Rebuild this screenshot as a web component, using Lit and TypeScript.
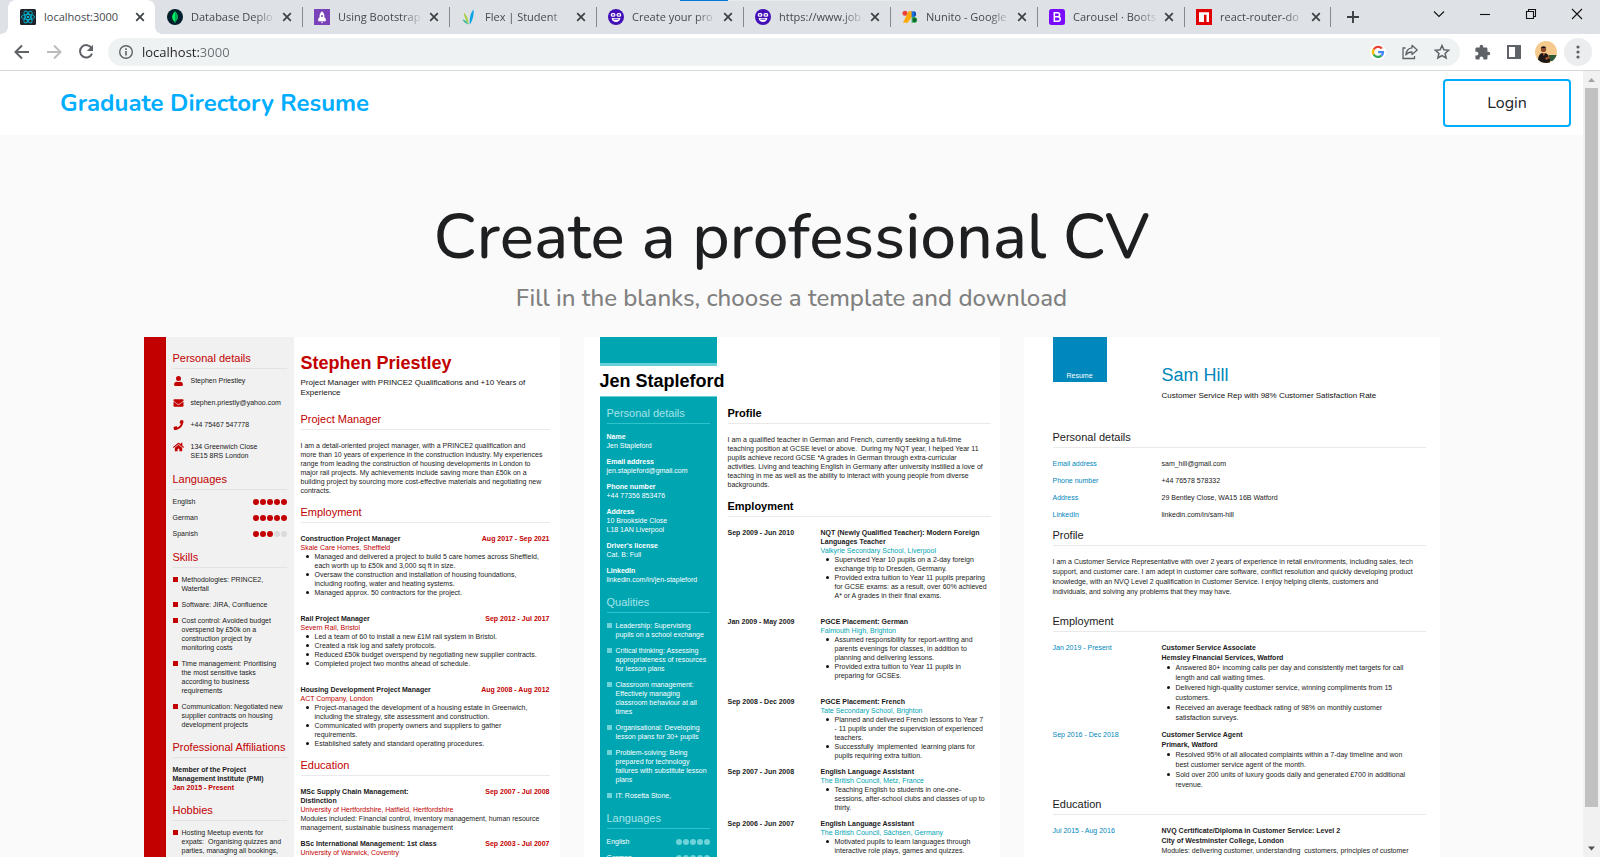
import { LitElement, html, css, svg, nothing, type TemplateResult } from "lit";
import { customElement } from "lit/decorators.js";
import { classMap } from "lit/directives/class-map.js";

/* ---------- icons ---------- */

const closeIcon = html`<svg width="10" height="10" viewBox="0 0 10 10" aria-hidden="true">
  <path d="M1.2 1.2 8.8 8.8M8.8 1.2 1.2 8.8" stroke="#3c4043" stroke-width="1.7" fill="none" />
</svg>`;

const reactFav = svg`<rect width="16" height="16" rx="1.5" fill="#20232a"/>
  <g fill="none" stroke="#00b4d0" stroke-width=".9">
    <ellipse cx="8" cy="8" rx="6.6" ry="2.6"/>
    <ellipse cx="8" cy="8" rx="6.6" ry="2.6" transform="rotate(60 8 8)"/>
    <ellipse cx="8" cy="8" rx="6.6" ry="2.6" transform="rotate(120 8 8)"/>
  </g><circle cx="8" cy="8" r="1.3" fill="#00b4d0"/>`;
const mongoFav = svg`<circle cx="8" cy="8" r="8" fill="#001e2b"/>
  <path d="M8 2.2c2 2 3 4 2.800 6-.1 2-1.200 3.300-2.400 4.200L8.200 14h-.5l-.2-1.600C6.200 11.500 5.200 10.200 5.100 8.200 5 6.200 6.200 4 8 2.200z" fill="#00ed64"/>
  <path d="M8 2.200v10.200c1.300-1 2.600-2.300 2.800-4.200.2-2-.8-4-2.800-6z" fill="#00a651"/>`;
const rocketFav = svg`<rect width="16" height="16" fill="#7a42b8"/>
  <path d="M8 2.300c2 1.500 2.600 3.700 2.400 6l1.400 1.500v2.400H4.200V9.800l1.400-1.500c-.2-2.300.4-4.500 2.400-6z" fill="#fff"/>
  <path d="M7 12.800h2L8 14.600z" fill="#fff"/><circle cx="8" cy="7" r="1" fill="#7a42b8"/>`;
const flexFav = svg`<path d="M8.800 15.500C8.300 10 9.200 4 12.600 0.500c.3 4-.4 10.500-3.800 15z" fill="#0aa5e6"/>
  <path d="M7.800 15.200C5.500 12 3.300 8.500 2.600 3.800c3 2 4.800 6.500 5.200 11.400z" fill="#a6ce39"/>
  <path d="M7.300 15.400C4.800 14.600 2.300 12.900 1.400 10.600c2.500.4 4.900 2.300 5.900 4.800z" fill="#34b78f"/>`;
const smileFav = svg`<circle cx="8" cy="8" r="8" fill="#4310b8"/>
  <g fill="none" stroke="#fff" stroke-width="1.200" stroke-linecap="round">
    <rect x="3.300" y="4.600" width="3.600" height="2.600" rx="1.300"/><rect x="9.100" y="4.600" width="3.600" height="2.600" rx="1.300"/>
  </g><path d="M3.600 9h8.800c-.3 2.600-2.100 4-4.400 4s-4.100-1.400-4.400-4z" fill="#fff"/>
  <path d="M5.600 10.200h4.800" stroke="#4310b8" stroke-width=".9"/>`;
const fontsFav = svg`<circle cx="3" cy="4.200" r="2.500" fill="#ea4335"/>
  <path d="M6.500 2.200h3.700v5.200L5.600 13.800H1z" fill="#fbaa0a"/>
  <path d="M9.600 2.200h2.200a3 3 0 0 1 0 5.800H9.600z" fill="#1a73e8"/><path d="M12 2.300a2.900 2.900 0 0 1 0 5.600z" fill="#174ea6"/>
  <path d="M9.600 8h2.600a2.900 2.900 0 0 1 0 5.800H9.600z" fill="#34a853"/><circle cx="12.600" cy="11" r="2" fill="#0d652d"/>`;
const bootFav = svg`<rect width="16" height="16" rx="2.500" fill="#7a0bff"/>
  <g fill="none" stroke="#fff" stroke-width="1.500"><path d="M5.300 3.700h3.300a2 2 0 0 1 0 4H5.300zM5.300 7.700h3.700a2.250 2.250 0 0 1 0 4.500H5.300z"/></g>`;
const npmFav = svg`<rect width="16" height="16" fill="#e30000"/><path d="M3 3.200h10v9.800h-2.500V5.700H8V13H3z" fill="#fff"/>`;

const fav = (g: TemplateResult<2>) => html`<svg class="fav" width="16" height="16" viewBox="0 0 16 16" aria-hidden="true">${g}</svg>`;

const TABS: [TemplateResult<2>, string][] = [
  [reactFav, "localhost:3000"],
  [mongoFav, "Database Deplo"],
  [rocketFav, "Using Bootstrap"],
  [flexFav, "Flex | Student"],
  [smileFav, "Create your pro"],
  [smileFav, "https://www.job"],
  [fontsFav, "Nunito - Google"],
  [bootFav, "Carousel · Boots"],
  [npmFav, "react-router-do"],
];

const line = (d: string, w = 2, color = "#5f6368") =>
  html`<svg width="18" height="18" viewBox="0 0 18 18" aria-hidden="true"><path d=${d} fill="none" stroke=${color} stroke-width=${w} /></svg>`;

const ctl = (label: string, d: string) =>
  html`<button class="ctl" aria-label=${label}><svg width="12" height="12" viewBox="0 0 12 12" aria-hidden="true"><path d=${d} fill="none" stroke="#111" stroke-width="1.100" /></svg></button>`;

/* Font Awesome style contact glyphs */
const glyph = (vb: string, d: string) => html`<svg class="glyph" viewBox=${vb} aria-hidden="true"><path d=${d} fill="currentColor" /></svg>`;
const userG = glyph("0 0 448 512", "M224 256a128 128 0 1 0 0-256 128 128 0 0 0 0 256zm90 32h-17a174 174 0 0 1-146 0h-17A134 134 0 0 0 0 422v42c0 27 21 48 48 48h352c27 0 48-21 48-48v-42c0-74-60-134-134-134z");
const mailG = glyph("0 0 512 512", "M502 191c4-3 10 0 10 4v205c0 27-21 48-48 48H48c-27 0-48-21-48-48V195c0-5 6-7 10-4 22 17 52 40 155 114 21 15 57 48 91 48 34 0 71-33 91-48 103-74 133-97 155-114zM256 320c23 0 57-30 74-42 133-96 143-105 174-129 5-5 8-12 8-19v-18c0-27-21-48-48-48H48c-27 0-48 21-48 48v18c0 7 3 14 8 19 31 24 41 33 174 129 17 12 51 42 74 42z");
const phoneG = glyph("0 0 512 512", "M493 25 389 1c-11-3-23 3-27 14l-48 112c-4 10-1 21 7 28l60 50a371 371 0 0 1-177 176l-49-60c-7-8-18-11-28-7L15 362c-11 4-17 16-14 27l24 104c3 11 12 19 23 19 256 0 464-207 464-464 0-11-8-20-19-23z");
const homeG = glyph("0 0 576 512", "M280 148 96 300v164a16 16 0 0 0 16 16h112a16 16 0 0 0 16-16v-96a16 16 0 0 1 16-16h64a16 16 0 0 1 16 16v96a16 16 0 0 0 16 16h112a16 16 0 0 0 16-16V300L296 148a12 12 0 0 0-16 0zm292 103-84-69V44a12 12 0 0 0-12-12h-56a12 12 0 0 0-12 12v73l-90-74a48 48 0 0 0-61 0L4 251a12 12 0 0 0-1 17l25 31a12 12 0 0 0 17 2l235-194a12 12 0 0 1 16 0l235 194a12 12 0 0 0 17-2l25-31a12 12 0 0 0-1-17z");

/* ---------- résumé building blocks ---------- */

interface Job {
  title: string;
  dates: string;
  place?: string;
  text?: string;
  points?: string[];
}

const points = (items: string[] = []) =>
  items.length ? html`<ul class="points">${items.map((t) => html`<li>${t}</li>`)}</ul>` : nothing;

const squares = (items: string[]) => html`<ul class="squares">${items.map((t) => html`<li>${t}</li>`)}</ul>`;

const rating = (name: string, n: number) => html`<li>
  <span>${name}</span>
  <span class="dots" role="img" aria-label="${n} of 5">${[1, 2, 3, 4, 5].map((i) => html`<i class=${classMap({ off: i > n })}></i>`)}</span>
</li>`;

const body = (j: Job) => html`
  ${j.place ? html`<p class="place">${j.place}</p>` : nothing}
  ${j.text ? html`<p>${j.text}</p>` : nothing}
  ${points(j.points)}`;

const stacked = (jobs: Job[]) => jobs.map((j) => html`<article>
  <header class="job-head"><h3>${j.title}</h3><time>${j.dates}</time></header>${body(j)}
</article>`);

const columns = (jobs: Job[]) => jobs.map((j) => html`<article class="cols">
  <time>${j.dates}</time><div><h3>${j.title}</h3>${body(j)}</div>
</article>`);

const section = (title: string, content: unknown, kind = "") =>
  html`<section><h2>${title}</h2><div class="content ${kind}">${content}</div></section>`;

@customElement("resume-card")
class ResumeCard extends LitElement {
  static properties = { variant: { type: String } };
  declare variant: string;

  static styles = css`
    :host {
      display: block;
      min-width: 0;
      background: #fff;
      color: #1a1a1a;
      font: 7px/9px "Liberation Sans", Arial, sans-serif;
      white-space: nowrap;
      overflow: hidden;
    }
    h1, h2, h3, p, ul, dl, dd, address { margin: 0; padding: 0; font-style: normal; }
    ul { list-style: none; }
    h3, dt, time { font-size: 7px; line-height: inherit; font-weight: 700; }
    h1 { font-size: 18px; line-height: 20px; }
    h2 {
      font-size: 11px; line-height: 14px; font-weight: 400;
      padding-bottom: 3px; border-bottom: 1px solid #e9e9e9;
    }
    h3, p, li, dd, .content span { white-space: pre; }
    .lead { font-size: 8px; line-height: 10px; color: #111; }

    .points li { display: flex; }
    .points li::before {
      content: ""; flex: none; width: 3px; height: 3px; border-radius: 50%;
      background: #111; margin: 3px 6px 0 5px;
    }
    .squares { display: grid; gap: 7px; }
    .squares li { display: flex; gap: 4px; }
    .squares li::before { content: ""; flex: none; width: 5px; height: 5px; margin-top: 2px; background: var(--accent); }
    .dots { display: flex; gap: 1px; }
    .dots i { width: 6px; height: 6px; border-radius: 50%; background: var(--accent); }
    .dots i.off { background: #dadada; }
    .ratings { display: grid; gap: 7px; padding-bottom: 1px; }
    .ratings li { display: flex; justify-content: space-between; align-items: center; height: 9px; }
    .entries { display: grid; gap: 17px; }
    .tight { display: grid; gap: 7px; }
    .job-head { display: flex; justify-content: space-between; }
    aside { display: flex; flex-direction: column; gap: 11px; }
    main { display: flex; flex-direction: column; gap: 10px; min-width: 0; }
    main .content { padding-top: 11px; }

    /* red */
    .red { --accent: #c20000; display: grid; grid-template-columns: 128px 1fr; border-left: 22px solid #c20000; }
    .red aside { background: #f1f1f1; padding: 14px 7px 40px; }
    .red aside .content { padding-top: 7px; }
    .red aside h2 { border-color: #e2e2e2; }
    .red main { padding: 16px 10px 40px 7px; }
    .red h1, .red h2, .red .place, .red time { color: #c20000; }
    .red .lead { margin-top: -5px; margin-bottom: 4px; }
    .contacts { display: grid; gap: 12px; padding-bottom: 3px; }
    .contacts li { display: flex; gap: 7px; min-height: 10px; }
    .contacts li:last-child { height: 16px; }
    .glyph { width: 11px; height: 10px; flex: none; color: #c20000; }

    /* teal */
    .teal { --accent: #6fd3da; padding: 0 9px 0 16px; }
    .teal .band { width: 117px; height: 26px; background: #00a5b2; border-bottom: 3px solid #66d0d8; }
    .teal h1 { color: #000; padding: 5px 0; }
    .teal .body { display: grid; grid-template-columns: 117px 1fr; gap: 11px; }
    .teal aside { background: #00a5b2; color: #fff; padding: 9px 7px 40px; border-top: 1px solid #66d0d8; }
    .teal aside h2 { color: #a6e4e9; border-color: #2cc4cd; }
    .teal aside .content { padding-top: 8px; }
    .teal main { padding: 10px 0 40px; }
    .teal main h2 { font-weight: 700; color: #000; }
    .teal .place { color: #00a5b2; }
    .teal .cols { display: grid; grid-template-columns: 93px 1fr; }
    .facts { display: grid; gap: 7px; }

    /* blue */
    .blue { padding: 0 14px 40px 29px; }
    .blue .top { display: grid; grid-template-columns: 109px 1fr; height: 93px; }
    .blue .stamp {
      width: 54px; height: 45px; background: #0087bb; color: #fff; font-size: 7px; line-height: 9px;
      display: flex; align-items: flex-end; justify-content: center; padding-bottom: 2px; box-sizing: border-box;
    }
    .blue h1 { color: #0087bb; font-weight: 400; margin-top: 28px; }
    .blue .lead { margin-top: 6px; }
    .blue .cols { display: grid; grid-template-columns: 109px 1fr; line-height: 10px; }
    .blue time, .blue dt { color: #0087bb; font-weight: 400; }
    .blue .place { font-weight: 700; }
    .blue dl { display: grid; gap: 8px; }
    .blue dl div { display: grid; grid-template-columns: 109px 1fr; }
    .blue main { gap: 7px; }
    .blue .summary { line-height: 10px; padding-bottom: 10px; }
    .blue .details { padding-bottom: 2px; }
  `;

  private red() {
    return html`<div class="red">
      <aside>
        ${section("Personal details", html`<ul class="contacts">
          <li>${userG}<span>Stephen Priestley</span></li>
          <li>${mailG}<span>stephen.priestly@yahoo.com</span></li>
          <li>${phoneG}<span>+44 75467 547778</span></li>
          <li>${homeG}<span>${"134 Greenwich Close\nSE15 8RS London"}</span></li>
        </ul>`)}
        ${section("Languages", html`<ul class="ratings">${rating("English", 5)}${rating("German", 5)}${rating("Spanish", 3)}</ul>`)}
        ${section("Skills", squares([
          "Methodologies: PRINCE2,\nWaterfall",
          "Software: JIRA, Confluence",
          "Cost control: Avoided budget\noverspend by £50k on a\nconstruction project by\nmonitoring costs",
          "Time management: Prioritising\nthe most sensitive tasks\naccording to business\nrequirements",
          "Communication: Negotiated new\nsupplier contracts on housing\ndevelopment projects",
        ]))}
        ${section("Professional Affiliations", html`<h3>${"Member of the Project\nManagement Institute (PMI)"}</h3><time>Jan 2015 - Present</time>`)}
        ${section("Hobbies", squares(["Hosting Meetup events for\nexpats:  Organising quizzes and\nparties, managing all bookings,\nmenus and activities"]))}
      </aside>
      <main>
        <h1>Stephen Priestley</h1>
        <p class="lead">${"Project Manager with PRINCE2 Qualifications and +10 Years of\nExperience"}</p>
        ${section("Project Manager", html`<p>${"I am a detail-oriented project manager, with a PRINCE2 qualification and\nmore than 10 years of experience in the construction industry. My experiences\nrange from leading the construction of housing developments in London to\nmajor rail projects. My achievements include saving more than £50k on a\nbuilding project by sourcing more cost-effective materials and negotiating new\ncontracts."}</p>`)}
        ${section("Employment", stacked([
          { title: "Construction Project Manager", dates: "Aug 2017 - Sep 2021", place: "Skale Care Homes, Sheffield", points: [
            "Managed and delivered a project to build 5 care homes across Sheffield,\neach worth up to £50k and 3,000 sq ft in size.",
            "Oversaw the construction and installation of housing foundations,\nincluding roofing, water and heating systems.",
            "Managed approx. 50 contractors for the project."] },
          { title: "Rail Project Manager", dates: "Sep 2012 - Jul 2017", place: "Severn Rail, Bristol", points: [
            "Led a team of 60 to install a new £1M rail system in Bristol.",
            "Created a risk log and safety protocols.",
            "Reduced £50k budget overspend by negotiating new supplier contracts.",
            "Completed project two months ahead of schedule."] },
          { title: "Housing Development Project Manager", dates: "Aug 2008 - Aug 2012", place: "ACT Company, London", points: [
            "Project-managed the development of a housing estate in Greenwich,\nincluding the strategy, site assessment and construction.",
            "Communicated with property owners and suppliers to gather\nrequirements.",
            "Established safety and standard operating procedures."] },
        ]), "entries")}
        ${section("Education", stacked([
          { title: "MSc Supply Chain Management:\nDistinction", dates: "Sep 2007 - Jul 2008", place: "University of Hertfordshire, Hatfield, Hertfordshire",
            text: "Modules included: Financial control, inventory management, human resource\nmanagement, sustainable business management" },
          { title: "BSc International Management: 1st class", dates: "Sep 2003 - Jul 2007", place: "University of Warwick, Coventry" },
        ]), "tight")}
      </main>
    </div>`;
  }

  private teal() {
    const fact = (k: string, v: string) => html`<div><dt>${k}</dt><dd>${v}</dd></div>`;
    return html`<div class="teal">
      <div class="band"></div>
      <h1>Jen Stapleford</h1>
      <div class="body">
        <aside>
          ${section("Personal details", html`<dl class="facts">
            ${fact("Name", "Jen Stapleford")}${fact("Email address", "jen.stapleford@gmail.com")}
            ${fact("Phone number", "+44 77356 853476")}${fact("Address", "10 Brookside Close\nL18 1AN Liverpool")}
            ${fact("Driver's license", "Cat. B: Full")}${fact("LinkedIn", "linkedin.com/in/jen-stapleford")}
          </dl>`)}
          ${section("Qualities", squares([
            "Leadership: Supervising\npupils on a school exchange",
            "Critical thinking: Assessing\nappropriateness of resources\nfor lesson plans",
            "Classroom management:\nEffectively managing\nclassroom behaviour at all\ntimes",
            "Organisational: Developing\nlesson plans for 30+ pupils",
            "Problem-solving: Being\nprepared for technology\nfailures with substitute lesson\nplans",
            "IT: Rosetta Stone,",
          ]))}
          ${section("Languages", html`<ul class="ratings">${rating("English", 5)}${rating("German", 5)}</ul>`)}
        </aside>
        <main>
          ${section("Profile", html`<p>${"I am a qualified teacher in German and French, currently seeking a full-time\nteaching position at GCSE level or above.  During my NQT year, I helped Year 11\npupils achieve record GCSE *A grades in German through extra-curricular\nactivities. Living and teaching English in Germany after university instilled a love of\nteaching in me as well as the ability to interact with young people from diverse\nbackgrounds."}</p>`)}
          ${section("Employment", html`
            <div class="entries">${columns([
              { title: "NQT (Newly Qualified Teacher): Modern Foreign\nLanguages Teacher", dates: "Sep 2009 - Jun 2010", place: "Valkyrie Secondary School, Liverpool", points: [
                "Supervised Year 10 pupils on a 2-day foreign\nexchange trip to Dresden, Germany.",
                "Provided extra tuition to Year 11 pupils preparing\nfor GCSE exams: as a result, over 60% achieved\nA* or A grades in their final exams."] },
              { title: "PGCE Placement: German", dates: "Jan 2009 - May 2009", place: "Falmouth High, Brighton", points: [
                "Assumed responsibility for report-writing and\nparents evenings for classes, in addition to\nplanning and delivering lessons.",
                "Provided extra tuition to Year 11 pupils in\npreparing for GCSEs."] },
              { title: "PGCE Placement: French", dates: "Sep 2008 - Dec 2009", place: "Tate Secondary School, Brighton", points: [
                "Planned and delivered French lessons to Year 7\n- 11 pupils under the supervision of experienced\nteachers.",
                "Successfully  implemented  learning plans for\npupils requiring extra tuition."] },
            ])}</div>
            ${columns([
              { title: "English Language Assistant", dates: "Sep 2007 - Jun 2008", place: "The British Council, Metz, France", points: [
                "Teaching English to students in one-one-\nsessions, after-school clubs and classes of up to\nthirty."] },
              { title: "English Language Assistant", dates: "Sep 2006 - Jun 2007", place: "The British Council, Sächsen, Germany", points: [
                "Motivated pupils to learn languages through\ninteractive role plays, games and quizzes."] },
            ])}`, "tight")}
        </main>
      </div>
    </div>`;
  }

  private blue() {
    const row = (k: string, v: string) => html`<div><dt>${k}</dt><dd>${v}</dd></div>`;
    return html`<div class="blue">
      <div class="top">
        <div class="stamp">Resume</div>
        <div><h1>Sam Hill</h1><p class="lead">Customer Service Rep with 98% Customer Satisfaction Rate</p></div>
      </div>
      <main>
        ${section("Personal details", html`<dl>
          ${row("Email address", "sam_hill@gmail.com")}${row("Phone number", "+44 76578 578332")}
          ${row("Address", "29 Bentley Close, WA15 16B Watford")}${row("LinkedIn", "linkedin.com/in/sam-hill")}
        </dl>`, "details")}
        ${section("Profile", html`<p>${"I am a Customer Service Representative with over 2 years of experience in retail environments, including sales, tech\nsupport, and customer care. I am adept in customer care software, conflict resolution and quickly developing product\nknowledge, with an NVQ Level 2 qualification in Customer Service. I enjoy helping clients, customers and\nindividuals, and solving any problems that they may have."}</p>`, "summary")}
        ${section("Employment", columns([
          { title: "Customer Service Associate", dates: "Jan 2019 - Present", place: "Hemsley Financial Services, Watford", points: [
            "Answered 80+ incoming calls per day and consistently met targets for call\nlength and call waiting times.",
            "Delivered high-quality customer service, winning compliments from 15\ncustomers.",
            "Received an average feedback rating of 98% on monthly customer\nsatisfaction surveys."] },
          { title: "Customer Service Agent", dates: "Sep 2016 - Dec 2018", place: "Primark, Watford", points: [
            "Resolved 95% of all allocated complaints within a 7-day timeline and won\nbest customer service agent of the month.",
            "Sold over 200 units of luxury goods daily and generated £700 in additional\nrevenue."] },
        ]), "tight")}
        ${section("Education", columns([
          { title: "NVQ Certificate/Diploma in Customer Service: Level 2", dates: "Jul 2015 - Aug 2016", place: "City of Westminster College, London",
            text: "Modules: delivering customer, understanding  customers, principles of customer\nservice" },
        ]), "tight")}
      </main>
    </div>`;
  }

  render() {
    return this.variant === "red" ? this.red() : this.variant === "teal" ? this.teal() : this.blue();
  }
}

/* ---------- browser window and page ---------- */

@customElement("app-root")
class AppRoot extends LitElement {
  static styles = css`
    :host {
      display: flex; flex-direction: column; height: 100vh; overflow: hidden;
      font-family: "Open Sans", "Noto Sans", sans-serif; background: #fff;
    }
    button { border: 0; padding: 0; background: none; font: inherit; color: inherit; display: grid; place-items: center; }
    h1, p { margin: 0; }

    .strip {
      position: relative; display: flex; align-items: stretch; height: 34px; flex: none;
      background: #dee1e6; padding-left: 8px;
    }
    .progress { position: absolute; top: 0; left: 680px; width: 240px; height: 1px; background: linear-gradient(90deg, #0078d7 48px, #e9e9e9 48px); }
    .tab {
      position: relative; box-sizing: border-box; flex: 0 1 147px; min-width: 0; display: flex; align-items: center;
      padding: 0 7px 0 12px; font-size: 11px; color: #45494d;
    }
    .tab.divided::before { content: ""; position: absolute; left: 0; top: 7px; height: 20px; width: 1px; background: #85888d; }
    .tab.active { background: #fff; border-radius: 8px 8px 0 0; }
    .tab.active::before, .tab.active::after {
      content: ""; position: absolute; bottom: 0; width: 8px; height: 8px;
    }
    .tab.active::before { left: -8px; background: radial-gradient(circle at 0 0, transparent 8px, #fff 8px); }
    .tab.active::after { right: -8px; background: radial-gradient(circle at 100% 0, transparent 8px, #fff 8px); }
    .fav { flex: none; margin-right: 8px; }
    .name {
      flex: 1; min-width: 0; overflow: hidden; white-space: nowrap; line-height: 20px;
      mask-image: linear-gradient(90deg, #000 75%, transparent 100%);
    }
    .active .name { mask-image: none; }
    .close { width: 16px; height: 16px; margin-left: 3px; }
    .plus { width: 43px; height: 33px; position: relative; }
    .plus::before { content: ""; position: absolute; left: -1px; top: 7px; height: 20px; width: 1px; background: #85888d; }
    .controls { margin-left: auto; display: flex; height: 28px; }
    .ctl { width: 46px; height: 28px; }

    .toolbar {
      display: flex; align-items: center; height: 36px; flex: none; background: #fff;
      border-bottom: 1px solid #d7d8da; padding: 0 8px 0 6px;
    }
    .tool { width: 32px; height: 32px; flex: none; }
    .omni {
      flex: 1; display: flex; align-items: center; height: 28px; border-radius: 14px; background: #eff2f3;
      padding: 0 2px 0 10px; margin: 0 6px;
    }
    .omni input {
      flex: 1; min-width: 0; border: 0; outline: 0; padding: 0; margin-left: 8px; font: 13px/20px "Open Sans", sans-serif;
      color: transparent; background: linear-gradient(90deg, #202124 57px, #6a6e73 57px); background-clip: text; -webkit-background-clip: text;
    }
    .menu { width: 28px; height: 28px; border-radius: 50%; background: #ebedee; margin-left: 2px; flex: none; }

    .window { flex: 1; min-height: 0; display: flex; }
    .page { flex: 1; min-width: 0; overflow: hidden; background: #fafafa; font-family: "Nunito", "Noto Sans", sans-serif; }
    .nav { display: flex; align-items: center; justify-content: space-between; background: #fff; padding: 8px 12px 8px 60px; }
    .brand { color: #00adff; font-weight: 700; font-size: 24px; line-height: 32px; text-decoration: none; }
    .login { width: 128px; height: 48px; border: 2px solid #00adff; border-radius: 4px; font-size: 16px; color: #212529; background: #fff; }
    .hero { padding: 64px 12px 21px; text-align: center; }
    .hero h1 { font-weight: 500; font-size: 64px; line-height: 77px; color: #1e1f21; }
    .hero p { font-weight: 500; font-size: 24px; line-height: 36px; color: #808080; margin-top: 4px; }
    .cards { box-sizing: border-box; max-width: 1320px; margin: 0 auto; padding: 0 12px; display: grid; grid-template-columns: repeat(3, 1fr); gap: 24px; }

    .scroll { width: 17px; flex: none; background: #f1f1f1; display: flex; flex-direction: column; align-items: center; }
    .scroll svg { flex: none; }
    .thumb { flex: 22; width: 13px; background: #c1c1c1; }
    .track { flex: 1; }
  `;

  render() {
    return html`
      <div class="strip">
        ${TABS.map(([icon, name], i) => html`<div class="tab ${classMap({ active: i === 0, divided: i > 1 })}">
          ${fav(icon)}<span class="name">${name}</span><button class="close" aria-label="Close tab">${closeIcon}</button>
        </div>`)}
        <button class="plus" aria-label="New tab"><svg width="14" height="14" viewBox="0 0 14 14"><path d="M7 1v12M1 7h12" stroke="#3c4043" stroke-width="1.900" /></svg></button>
        <div class="controls">
          ${ctl("Search tabs", "M1 3.500 6 8.500 11 3.500")}
          ${ctl("Minimize", "M1 6.500h10")}
          ${ctl("Restore", "M1.500 3.500h7v7h-7zM3.500 3.500v-2h7v7h-2")}
          ${ctl("Close", "M1 1 11 11M11 1 1 11")}
        </div>
        <div class="progress"></div>
      </div>
      <div class="toolbar">
        <button class="tool" aria-label="Back">${line("M16 9H3M9 2.500 2.500 9 9 15.500")}</button>
        <button class="tool" aria-label="Forward">${line("M2 9h13M9 2.500 15.500 9 9 15.500", 2, "#babcbe")}</button>
        <button class="tool" aria-label="Reload"><svg width="18" height="18" viewBox="0 0 18 18"><path d="M14.600 5.200A6.200 6.200 0 1 0 15 10.600" fill="none" stroke="#5f6368" stroke-width="2"/><path d="M16 1.800V8H9.800z" fill="#5f6368"/></svg></button>
        <div class="omni">
          <svg width="16" height="16" viewBox="0 0 16 16" aria-hidden="true"><circle cx="8" cy="8" r="6.300" fill="none" stroke="#5f6368" stroke-width="1.400"/><path d="M8 7v4.500M8 4.300v1.600" stroke="#5f6368" stroke-width="1.600"/></svg>
          <input type="text" aria-label="Address" value="localhost:3000" />
          <button class="tool" aria-label="Google"><svg width="16" height="16" viewBox="0 0 16 16"><circle cx="8" cy="8" r="8" fill="#fff"/><g fill="none" stroke-width="2.300"><path d="M11.900 4.600A5 5 0 0 0 3.700 5.500" stroke="#ea4335"/><path d="M3.700 5.400a5 5 0 0 0 0 5.200" stroke="#fbbc05"/><path d="M3.700 10.500a5 5 0 0 0 7.700 1.100" stroke="#34a853"/><path d="M11.300 11.700A5 5 0 0 0 13 8.200H8.200" stroke="#4285f4"/></g></svg></button>
          <button class="tool" aria-label="Share"><svg width="18" height="18" viewBox="0 0 18 18"><path d="M4.500 5H2v10.500h11.500V13" fill="none" stroke="#5f6368" stroke-width="1.300"/><path d="M11 2.300 16.200 7 11 11.500V9c-3 0-4.800 1-6.200 3C5.200 8.200 7.500 5.300 11 4.900z" fill="none" stroke="#5f6368" stroke-width="1.300" stroke-linejoin="round"/></svg></button>
          <button class="tool" aria-label="Bookmark"><svg width="18" height="18" viewBox="0 0 18 18"><path d="m9 2.500 1.900 4.300 4.700.5-3.500 3.100 1 4.600L9 12.600 4.900 15l1-4.600-3.500-3.100 4.700-.5z" fill="none" stroke="#5f6368" stroke-width="1.500"/></svg></button>
        </div>
        <button class="tool" aria-label="Extensions"><svg width="17" height="17" viewBox="0 0 24 24"><path d="M20.500 11H19V7c0-1.100-.9-2-2-2h-4V3.500a2.500 2.500 0 0 0-5 0V5H4c-1.100 0-2 .9-2 2v3.800h1.500a2.700 2.700 0 0 1 0 5.400H2V20c0 1.100.9 2 2 2h3.800v-1.500a2.700 2.700 0 0 1 5.400 0V22H17c1.100 0 2-.9 2-2v-4h1.500a2.500 2.500 0 0 0 0-5z" fill="#5f6368"/></svg></button>
        <button class="tool" aria-label="Side panel"><svg width="16" height="16" viewBox="0 0 16 16"><path d="M1 1h14v14H1zM3 3v10h6V3z" fill="#5f6368" fill-rule="evenodd"/></svg></button>
        <button class="tool" aria-label="Profile"><svg width="22" height="22" viewBox="0 0 22 22"><defs><clipPath id="av"><circle cx="11" cy="11" r="11"/></clipPath></defs><g clip-path="url(#av)"><rect width="22" height="22" fill="#f6c98c"/><path d="M14 14h8v6h-8z" fill="#2c5a38"/><path d="M3 22c-.5-5 1-9 4-10l3 0c4 1 5 5 5 10z" fill="#1e1817"/><circle cx="8.500" cy="8.500" r="2.600" fill="#8a4a2c"/><path d="M5.800 7.800c0-3.300 5.400-3.300 5.400 0L10.500 7H7z" fill="#1a1210"/><path d="m7.500 12 1.300 3 1.500-3z" fill="#b5623a"/><path d="M10 17l4-2 1 2-4 2z" fill="#a4532f"/></g></svg></button>
        <button class="menu" aria-label="Menu"><svg width="4" height="16" viewBox="0 0 4 16"><g fill="#5f6368"><circle cx="2" cy="3" r="1.600"/><circle cx="2" cy="8" r="1.600"/><circle cx="2" cy="13" r="1.600"/></g></svg></button>
      </div>
      <div class="window">
        <div class="page">
          <nav class="nav"><a class="brand" href="#">Graduate Directory Resume</a><button class="login">Login</button></nav>
          <div class="hero"><h1>Create a professional CV</h1><p>Fill in the blanks, choose a template and download</p></div>
          <div class="cards">
            <resume-card variant="red"></resume-card>
            <resume-card variant="teal"></resume-card>
            <resume-card variant="blue"></resume-card>
          </div>
        </div>
        <div class="scroll" aria-hidden="true">
          <svg width="17" height="17" viewBox="0 0 17 17"><path d="M5 11 8.500 7 12 11z" fill="#a3a3a3"/></svg>
          <div class="thumb"></div>
          <div class="track"></div>
          <svg width="17" height="17" viewBox="0 0 17 17"><path d="M5 6.500 8.500 10.500 12 6.500z" fill="#505050"/></svg>
        </div>
      </div>`;
  }
}
